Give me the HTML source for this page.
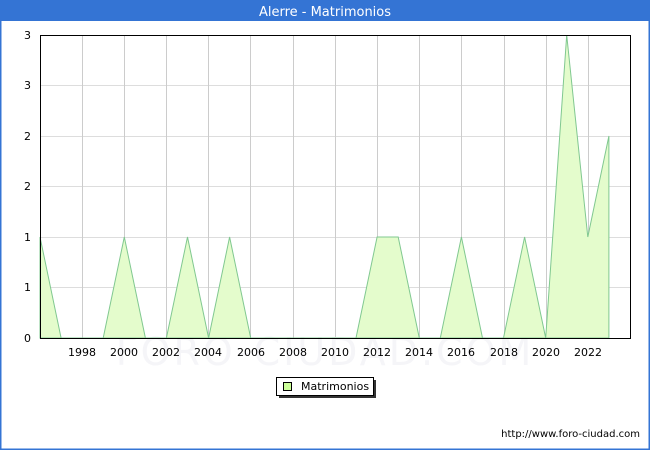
<!DOCTYPE html><html><head><style>body{margin:0;width:650px;height:450px;overflow:hidden;background:#fff;font-family:"DejaVu Sans","Liberation Sans",sans-serif}</style></head><body>
<svg width="650" height="450" xmlns="http://www.w3.org/2000/svg" font-family="DejaVu Sans, Liberation Sans, sans-serif">
<rect x="0.5" y="0.5" width="649" height="449" fill="#fff" stroke="#3474d4" stroke-width="2"/>
<rect x="0" y="0" width="650" height="21" fill="#3474d4"/>
<text x="325" y="16" fill="#fff" font-size="13" text-anchor="middle">Alerre - Matrimonios</text>
<g stroke="#ddd" stroke-width="1">
<line x1="40" y1="85.5" x2="630" y2="85.5"/><line x1="40" y1="136.5" x2="630" y2="136.5"/><line x1="40" y1="186.5" x2="630" y2="186.5"/><line x1="40" y1="237.5" x2="630" y2="237.5"/><line x1="40" y1="287.5" x2="630" y2="287.5"/>
</g>
<g stroke="#ccc" stroke-width="1">
<line x1="82.5" y1="35" x2="82.5" y2="338"/><line x1="124.5" y1="35" x2="124.5" y2="338"/><line x1="166.5" y1="35" x2="166.5" y2="338"/><line x1="208.5" y1="35" x2="208.5" y2="338"/><line x1="250.5" y1="35" x2="250.5" y2="338"/><line x1="293.5" y1="35" x2="293.5" y2="338"/><line x1="335.5" y1="35" x2="335.5" y2="338"/><line x1="377.5" y1="35" x2="377.5" y2="338"/><line x1="419.5" y1="35" x2="419.5" y2="338"/><line x1="461.5" y1="35" x2="461.5" y2="338"/><line x1="504.5" y1="35" x2="504.5" y2="338"/><line x1="546.5" y1="35" x2="546.5" y2="338"/><line x1="588.5" y1="35" x2="588.5" y2="338"/>
</g>
<text x="325" y="365" fill="#f5f5f8" font-size="38" text-anchor="middle" letter-spacing="3">FORO-CIUDAD.COM</text>
<polygon fill="#e4fccc" stroke="#80c890" stroke-width="1" points="40,237 61.1,338 82.1,338 103.2,338 124.3,237 145.4,338 166.4,338 187.5,237 208.6,338 229.6,237 250.7,338 271.8,338 292.8,338 313.9,338 335,338 356,338 377.1,237 398.2,237 419.3,338 440.3,338 461.4,237 482.5,338 503.5,338 524.6,237 545.7,338 566.7,35 587.8,237 608.9,136 608.9,338 40,338"/>
<rect x="40.5" y="35.5" width="590" height="303" fill="none" stroke="#000" stroke-width="1"/>
<g font-size="11" fill="#000" text-anchor="end">
<text x="31" y="39">3</text><text x="31" y="89">3</text><text x="31" y="140">2</text><text x="31" y="190">2</text><text x="31" y="241">1</text><text x="31" y="291">1</text><text x="31" y="342">0</text>
</g>
<g font-size="11" fill="#000" text-anchor="middle">
<text x="82" y="356">1998</text><text x="124" y="356">2000</text><text x="166" y="356">2002</text><text x="208" y="356">2004</text><text x="251" y="356">2006</text><text x="293" y="356">2008</text><text x="335" y="356">2010</text><text x="377" y="356">2012</text><text x="419" y="356">2014</text><text x="461" y="356">2016</text><text x="504" y="356">2018</text><text x="546" y="356">2020</text><text x="588" y="356">2022</text>
</g>
<rect x="279" y="380" width="97" height="18" fill="#333"/>
<rect x="276.5" y="377.5" width="97" height="18" fill="#fff" stroke="#000"/>
<rect x="283.5" y="382.5" width="8" height="8" fill="#ccff99" stroke="#000"/>
<text x="301" y="390" font-size="11">Matrimonios</text>
<text x="640" y="437" font-size="10" text-anchor="end">http://www.foro-ciudad.com</text>
</svg>
</body></html>
